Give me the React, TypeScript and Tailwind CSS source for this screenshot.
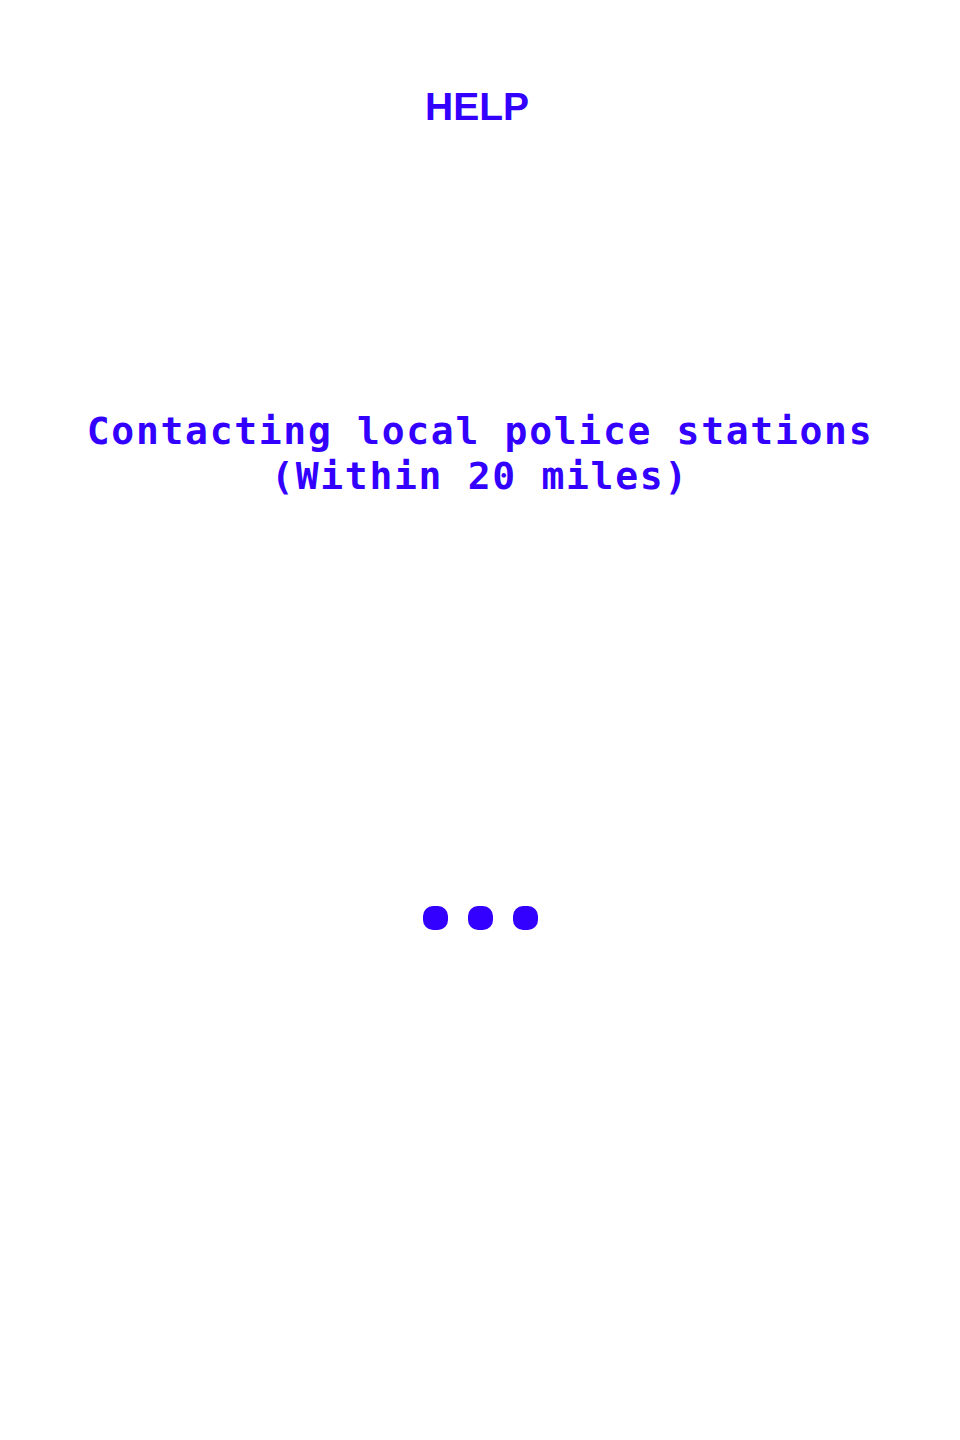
const Dot = () => <span className="block w-[25px] h-[24px] rounded-[10px] bg-[#3300ff]" />;

const App = () => {
  return (
    <div className="flex flex-col items-center min-h-[1440px] w-full bg-white text-[#3300ff]">
      <h1 className="mt-[87px] mr-[6px] text-[39px] leading-[40px] font-bold font-['Liberation_Sans',Arial,sans-serif]">
        HELP
      </h1>
      <p className="mt-[282px] text-center text-[38px] leading-[45px] font-bold tracking-[1.7px] font-['DejaVu_Sans_Mono',monospace]">
        Contacting local police stations
        <br />
        (Within 20 miles)
      </p>
      <div className="mt-[407px] flex flex-row gap-[20px]">
        <Dot />
        <Dot />
        <Dot />
      </div>
    </div>
  );
};

export default App;
